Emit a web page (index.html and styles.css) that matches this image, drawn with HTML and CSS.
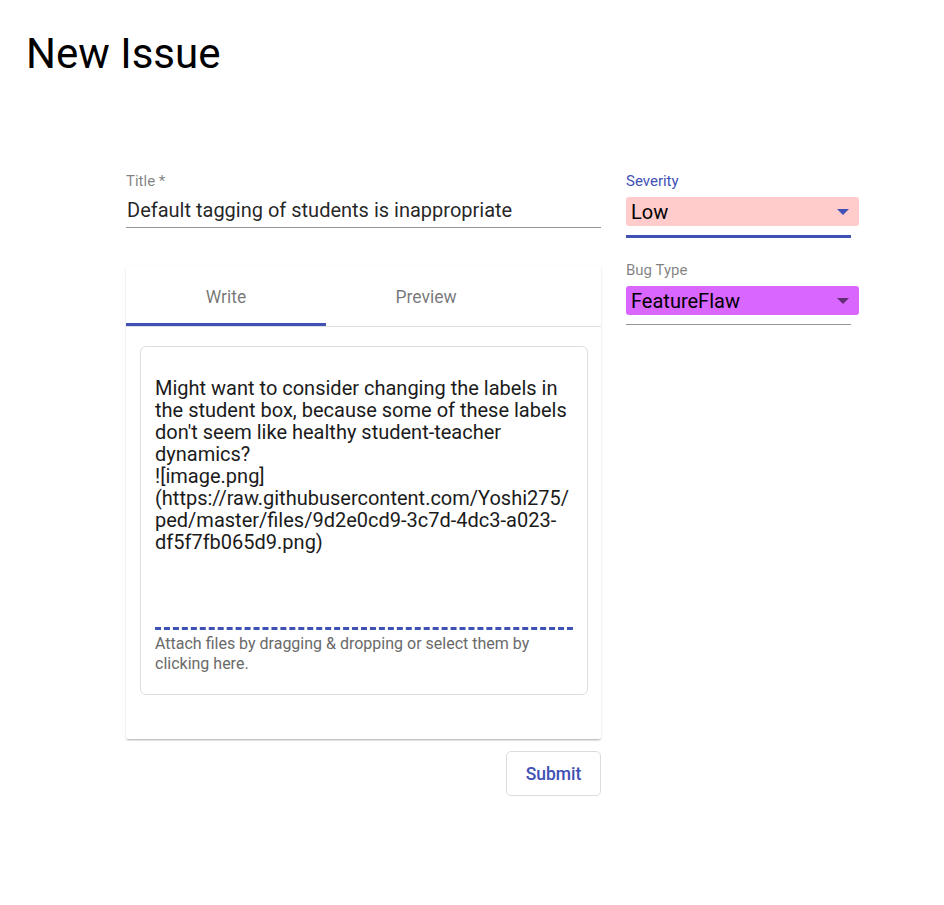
FILE: index.html
```html
<!DOCTYPE html>
<html>
<head>
<meta charset="utf-8">
<link rel="stylesheet" href="styles.css">
</head>
<body>
<h1 class="page-title">New Issue</h1>
<div class="form">
  <div class="main-col">
    <div class="field">
      <div class="label">Title *</div>
      <div class="input">Default tagging of students is inappropriate</div>
    </div>
    <div class="card">
      <div class="tabs">
        <div class="tab active">Write</div>
        <div class="tab">Preview</div>
      </div>
      <div class="card-body">
        <div class="editor">
          <div class="editor-text">Might want to consider changing the labels in the student box, because some of these labels don't seem like healthy student-teacher dynamics?<br>![image.png]<br>(https://raw.githubusercontent.com/Yoshi275/<br>ped/master/files/9d2e0cd9-3c7d-4dc3-a023-<br>df5f7fb065d9.png)</div>
          <div class="dashed"></div>
          <div class="attach">Attach files by dragging &amp; dropping or select them by clicking here.</div>
        </div>
      </div>
    </div>
    <div class="actions">
      <button class="submit">Submit</button>
    </div>
  </div>
  <div class="side-col">
    <div class="select-field focused">
      <div class="label blue">Severity</div>
      <div class="select low"><span>Low</span><span class="arrow blue-arrow"></span></div>
      <div class="underline thick"></div>
    </div>
    <div class="select-field">
      <div class="label">Bug Type</div>
      <div class="select flaw"><span>FeatureFlaw</span><span class="arrow"></span></div>
      <div class="underline"></div>
    </div>
  </div>
</div>
</body>
</html>
```

FILE: styles.css
```css
* { box-sizing: border-box; }
body {
  margin: 0;
  font-family: Roboto, "Noto Sans", sans-serif;
  color: #000;
  background: #fff;
}
.page-title {
  margin: 0;
  padding: 26px 0 0 26px;
  font-size: 42px;
  font-weight: 400;
  line-height: 56px;
}
.form {
  display: flex;
  gap: 25px;
  padding: 91px 0 0 126px;
}
.main-col { width: 475px; }
.side-col { width: 233px; display: flex; flex-direction: column; gap: 24px; }
.label {
  font-size: 15px;
  color: rgba(0,0,0,0.5);
  line-height: 16px;
  margin-bottom: 8px;
}
.field .label { margin-bottom: 4px; }
.label.blue { color: #3f51b5; }
.input {
  font-size: 20px;
  line-height: 24px;
  padding: 5px 0 5px 1px;
  border-bottom: 1px solid #949494;
  color: rgba(0,0,0,0.87);
}
.card {
  margin-top: 38px;
  background: #fff;
  box-shadow: 0 2px 2px -1px rgba(0,0,0,0.25), 0 1px 3px rgba(0,0,0,0.1);
  border-radius: 2px;
}
.tabs {
  display: flex;
  border-bottom: 1px solid #e0e0e0;
  height: 61px;
}
.tab {
  width: 200px;
  height: 60px;
  padding-top: 2px;
  text-align: center;
  font-size: 17.5px;
  color: rgba(0,0,0,0.55);
  line-height: 58px;
  font-weight: 400;
}
.tab.active { border-bottom: 3px solid #3f51b5; }
.card-body { padding: 19px 13px 44px 14px; }
.editor {
  border: 1px solid #dedede;
  border-radius: 6px;
  padding: 30px 14px 19px 14px;
  height: 349px;
}
.editor-text {
  font-size: 20px;
  line-height: 22px;
  color: #1b1b1b;
  height: 250px;
}
.dashed {
  border-top: 3px dashed #3f51b5;
  margin: 0 0 4px 0;
}
.attach {
  font-size: 16px;
  line-height: 20px;
  color: #6a6a6a;
  width: 400px;
}
.actions {
  display: flex;
  justify-content: flex-end;
  margin-top: 12px;
}
.submit {
  font-family: Roboto, sans-serif;
  font-size: 17.5px;
  font-weight: 500;
  color: #3f51b5;
  background: #fff;
  border: 1px solid #dcdcdc;
  border-radius: 5px;
  width: 95px;
  height: 45px;
}
.select-field { width: 233px; }
.select {
  display: flex;
  justify-content: space-between;
  align-items: center;
  height: 29px;
  border-radius: 3px;
  padding: 0 10px 0 5px;
  font-size: 20px;
  color: #000;
}
.select.low { background: #ffcccb; }
.select.flaw { background: #d866ff; }
.arrow {
  width: 0; height: 0;
  border-left: 6px solid transparent;
  border-right: 6px solid transparent;
  border-top: 6px solid rgba(0,0,0,0.55);
}
.arrow.blue-arrow { border-top-color: #3f51b5; }
.underline {
  width: 225px;
  margin-top: 9px;
  border-top: 1px solid #949494;
}
.underline.thick { border-top: 3px solid #3f51b5; margin-top: 9px; }
```
